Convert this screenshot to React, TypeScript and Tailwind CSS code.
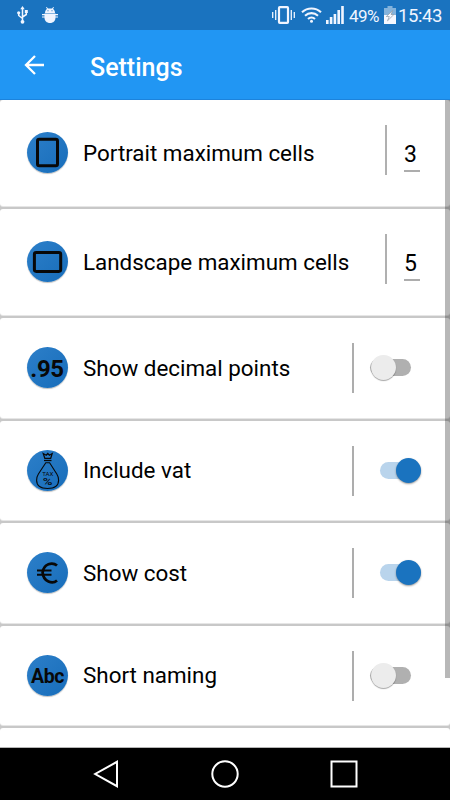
import React from "react";

type Setting = {
  title: string;
  icon: React.ReactNode;
  height: string;
  value?: string;
  enabled?: boolean;
};

const settings: Setting[] = [
  {
    title: "Portrait maximum cells",
    height: "h-[106px]",
    value: "3",
    icon: (
      <svg className="h-full w-full" viewBox="0 0 41 41" fill="none" stroke="#080808">
        <rect x="10.5" y="7.3" width="20" height="26.5" rx="1.8" strokeWidth="3" />
      </svg>
    ),
  },
  {
    title: "Landscape maximum cells",
    height: "h-[106px]",
    value: "5",
    icon: (
      <svg className="h-full w-full" viewBox="0 0 41 41" fill="none" stroke="#080808">
        <rect x="7.4" y="11.4" width="26.3" height="19" rx="1.8" strokeWidth="3" />
      </svg>
    ),
  },
  {
    title: "Show decimal points",
    height: "h-[100px]",
    enabled: false,
    icon: <span className="mt-[2px] mr-px text-[24px] font-bold tracking-[-0.4px]">.95</span>,
  },
  {
    title: "Include vat",
    height: "h-[99px]",
    enabled: true,
    icon: (
      <svg className="h-full w-full" viewBox="0 0 41 41" fill="none" stroke="#080808">
        <path d="M17.800 8.300L16.200 3.500l3 1.700 1.600-1.700 1.600 1.700 2.800-1.700-1.500 4.800z" strokeWidth="1.200" />
        <path d="M17 10.500h7.500" strokeWidth="1.300" />
        <path
          d="M18.800 12.800h3.800L29.800 24c1.300 2 1.800 4 1.800 6.300 0 5.700-4 8.200-11 8.200s-11-2.500-11-8.200c0-2.300.5-4.300 1.800-6.300z"
          strokeWidth="1.100"
        />
        <text
          x="15.200"
          y="26"
          fontSize="6"
          textLength="11.200"
          lengthAdjust="spacingAndGlyphs"
          fill="#080808"
          stroke="none"
        >
          TAX
        </text>
        <text
          x="15.700"
          y="35"
          fontSize="9.500"
          fontWeight="500"
          textLength="9.700"
          lengthAdjust="spacingAndGlyphs"
          fill="#080808"
          stroke="none"
        >
          %
        </text>
      </svg>
    ),
  },
  {
    title: "Show cost",
    height: "h-[100px]",
    enabled: true,
    icon: (
      <svg className="h-full w-full" viewBox="0 0 41 41" fill="none" stroke="#080808">
        <path
          d="M30 13.600C25.500 9.600 16.500 11.600 15.600 20.500c.9 9.500 9.900 12 14.400 8"
          strokeWidth="2.700"
        />
        <path d="M10 18.500h14.500M10 22.700h14.500" strokeWidth="1.900" />
      </svg>
    ),
  },
  {
    title: "Short naming",
    height: "h-[99px]",
    enabled: false,
    icon: <span className="mt-[3px] text-[19.500px] font-bold tracking-[-0.4px]">Abc</span>,
  },
];

function StatusBar() {
  return (
    <div className="flex h-[30px] shrink-0 items-center bg-[#1a73bf] pr-[9px] pl-[17px] text-[#f0f5ff]">
      <svg className="h-[18px] w-[11px]" viewBox="0 0 11 18" fill="none" stroke="currentColor">
        <path d="M5.500 2v14M1.700 7v2.500l3.800 3M9.300 5.500v3l-3.800 2.500" strokeWidth="1.500" />
        <path d="M5.500 0L7.700 3.200H3.300z" fill="currentColor" stroke="none" />
        <circle cx="5.500" cy="15.800" r="1.900" fill="currentColor" stroke="none" />
        <circle cx="1.700" cy="6.800" r="1.600" fill="currentColor" stroke="none" />
        <path d="M7.800 4h3v3h-3z" fill="currentColor" stroke="none" />
      </svg>
      <svg className="ml-[14px] h-4 w-4" viewBox="0 0 16 16" fill="currentColor">
        <path d="M3 6C3 3.800 4 2.500 5 1.900L4 .3l.7-.3L6 1.500h4L11.300 0l.7.300-1 1.600c1 .6 2 1.900 2 4.100z" />
        <path d="M0 7h16v1.200H0zM0 9.400h16v1.200H0z" />
        <path d="M2.500 6.500h11v4c0 3.300-2.200 5.500-5.500 5.500s-5.500-2.200-5.500-5.500z" />
        <path d="M5.500 3.200h1v1h-1zM9.500 3.200h1v1h-1z" fill="#1a73bf" />
      </svg>
      <svg className="ml-auto h-[18px] w-[23px]" viewBox="0 0 23 18" fill="none" stroke="currentColor">
        <rect x="7" y="1.200" width="9" height="15.600" rx=".8" strokeWidth="2.200" />
        <path d="M.7 6v6M3.700 4v10M19.300 4v10M22.300 6v6" strokeWidth="1.300" />
      </svg>
      <svg
        className="ml-[6px] h-4 w-[21px]"
        viewBox="0 0 21 16"
        fill="none"
        stroke="currentColor"
        strokeWidth="2.100"
      >
        <path d="M1 5.200c5.500-5 13.500-5 19 0M4 8.700c3.800-3.400 9.200-3.400 13 0M7 12c2-1.800 5-1.800 7 0" />
        <circle cx="10.500" cy="14.300" r="1.500" fill="currentColor" stroke="none" />
      </svg>
      <svg className="ml-[4px] h-[18px] w-[18px]" viewBox="0 0 18 18" fill="currentColor">
        <path d="M0 14h2.600v4H0zM3.800 11h2.600v7H3.800zM7.600 8h2.600v10H7.600zM11.400 4H14v14h-2.600zM15.200 0h2.600v18h-2.600z" />
      </svg>
      <span className="mt-[2px] ml-[5px] w-[30px] text-[17px] leading-none tracking-[-0.6px] whitespace-nowrap">
        49%
      </span>
      <svg className="ml-[5px] h-[18px] w-3" viewBox="0 0 12 18">
        <path d="M3.500 0h5v2H12v7H0V2h3.500z" fill="#83b3dc" />
        <path d="M0 9h12v9H0z" fill="#f5f8ff" />
        <path
          d="M8.800 4.500L2.300 10.500h3L3.500 14.800l6.400-6.300H7z"
          fill="#f5f8ff"
          stroke="#8d99a3"
          strokeWidth=".7"
        />
      </svg>
      <span className="mt-[2px] ml-[2px] w-[43px] text-[18.500px] leading-none tracking-[-0.4px] whitespace-nowrap">
        15:43
      </span>
    </div>
  );
}

function Switch({ enabled }: { enabled: boolean }) {
  return (
    <div
      className={`relative mt-[-1px] h-[17px] w-[41px] rounded-full ${
        enabled ? "mr-[29px] bg-[#b9d4ec]" : "mr-[39px] bg-[#b0b0b0]"
      }`}
    >
      <div
        className={`absolute -top-1 h-[25px] w-[25px] rounded-full ${
          enabled
            ? "right-0 bg-[#1a73bf] shadow-[0_1px_2px_rgba(0,0,0,0.4)]"
            : "left-[0.5px] bg-[#ececec] shadow-[0_1px_1px_rgba(0,0,0,0.35)]"
        }`}
      />
    </div>
  );
}

function SettingRow({ setting }: { setting: Setting }) {
  const isNumber = setting.value !== undefined;

  return (
    <div
      className={`flex shrink-0 items-center rounded-[3px] bg-white pl-[27px] shadow-[0_1px_0_#e6e6e6] ${setting.height}`}
    >
      <div
        className={`flex h-[41px] w-[41px] items-center justify-center rounded-full bg-linear-to-br from-[#2c7fc9] to-[#176dba] leading-none text-[#080808] shadow-[0_1px_1px_rgba(0,0,0,0.25)] ${
          isNumber ? "mt-[-2px]" : "mt-[-1px]"
        }`}
      >
        {setting.icon}
      </div>
      <div className="ml-[15px] text-[22.400px] leading-none whitespace-nowrap">{setting.title}</div>
      {isNumber ? (
        <div className="ml-auto flex items-center">
          <div className="mt-[-6px] h-[50px] w-[2px] bg-[#b0b0b0]" />
          <div className="mt-[8px] mr-[30px] ml-[17px] flex h-[29px] w-4 items-start border-b-2 border-[#adadad] text-[23px] leading-none">
            <span>{setting.value}</span>
          </div>
        </div>
      ) : (
        <div className="ml-auto flex items-center">
          <div
            className={`h-[50px] w-[2px] bg-[#adadad] ${setting.enabled ? "mr-[26px]" : "mr-[16px]"}`}
          />
          <Switch enabled={!!setting.enabled} />
        </div>
      )}
    </div>
  );
}

export default function App() {
  return (
    <div className="flex h-[800px] w-[450px] flex-col overflow-hidden bg-white font-['Roboto',sans-serif] text-black">
      <StatusBar />

      <header className="flex h-[70px] shrink-0 items-center border-b border-[#1c83dc] bg-[#2196f3] text-white">
        <svg
          className="ml-6 h-5 w-5"
          viewBox="0 0 20 20"
          fill="none"
          stroke="currentColor"
          strokeWidth="2.300"
        >
          <path d="M20 10H2M11 1l-9 9 9 9" />
        </svg>
        <h1 className="mt-[5px] ml-[46px] text-[25px] leading-none font-medium">Settings</h1>
      </header>

      <main className="relative flex h-[648px] shrink-0 flex-col gap-[3px] overflow-hidden border-b border-[#b5b5b5] bg-[#c8c8c8]">
        {settings.map((setting) => (
          <SettingRow key={setting.title} setting={setting} />
        ))}
        <div className="h-[30px] shrink-0 rounded-t-[3px] bg-white" />
        <div className="absolute top-0 right-0 h-[578px] w-[5px] bg-black/28" />
      </main>

      {/* Android navigation bar */}
      <nav className="flex h-[52px] shrink-0 items-center bg-black pl-[93px]">
        <svg className="h-7 w-[26px]" viewBox="0 0 26 28" fill="none" stroke="white" strokeWidth="2">
          <path d="M24 1.800v24.400L2.200 14z" />
        </svg>
        <svg className="ml-[92px] h-7 w-7" viewBox="0 0 28 28" fill="none" stroke="white" strokeWidth="2">
          <circle cx="14" cy="14" r="12.700" />
        </svg>
        <svg className="ml-[91px] h-7 w-7" viewBox="0 0 28 28" fill="none" stroke="white" strokeWidth="2">
          <rect x="1.500" y="1.500" width="25" height="25" />
        </svg>
      </nav>
    </div>
  );
}
